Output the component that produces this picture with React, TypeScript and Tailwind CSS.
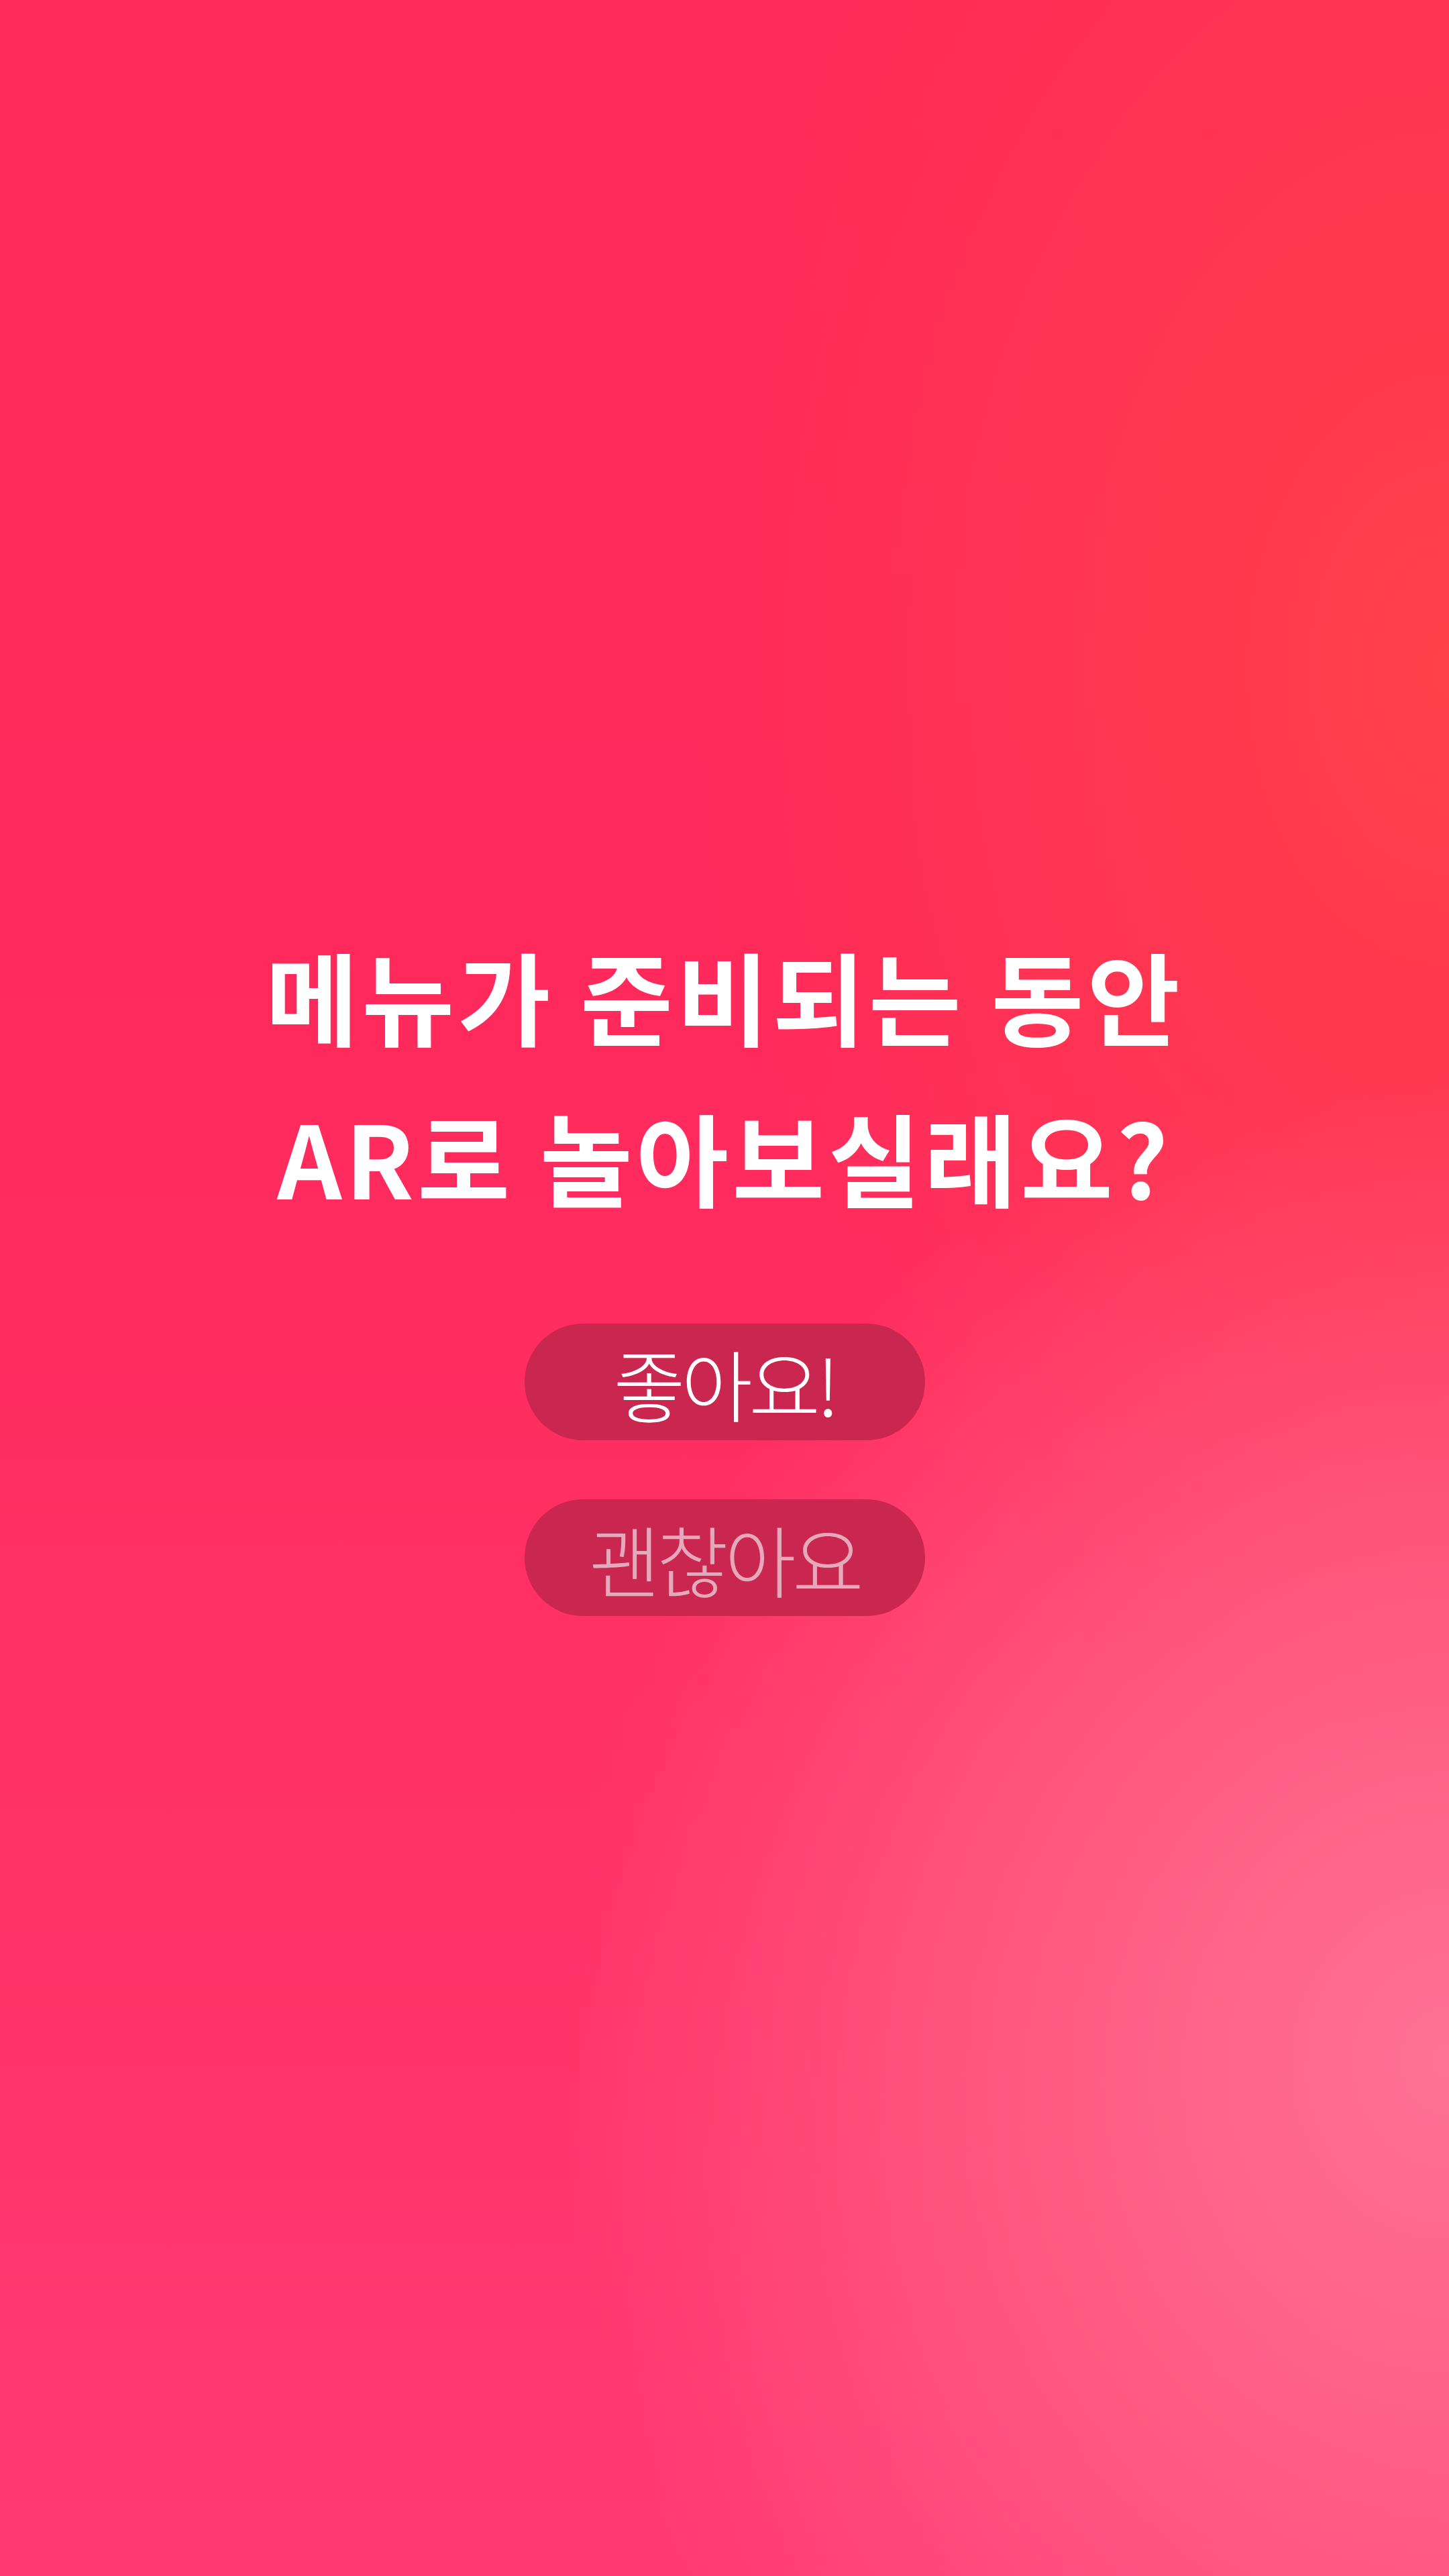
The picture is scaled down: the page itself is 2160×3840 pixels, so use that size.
export default function App() {
  return (
    <div
      className="relative w-full h-screen overflow-hidden flex flex-col items-center justify-center pb-[68px] bg-[radial-gradient(ellipse_1700px_1900px_at_100%_80%,rgba(255,114,148,1)_0%,rgba(255,108,142,0.65)_38%,rgba(255,90,130,0)_78%),radial-gradient(ellipse_1500px_2200px_at_100%_26%,rgba(255,66,72,0.95)_0%,rgba(255,60,75,0)_75%),linear-gradient(180deg,#ff2b58_0%,#ff2a5c_40%,#ff3a72_100%)]"
      style={{ fontFamily: '"Noto Sans CJK KR", "Noto Sans", sans-serif' }}
    >
      <h1 className="text-white font-semibold text-[150px] leading-[240px] tracking-[0.035em] text-center">
        메뉴가 준비되는 동안
        <br />
        AR로 놀아보실래요?
      </h1>
      <div className="mt-[130px] flex flex-col gap-[88px]">
        <button className="w-[597px] h-[174px] rounded-full bg-[#c92750] text-white text-[116px] font-light tracking-[-0.05em] leading-none flex items-center justify-center">
          좋아요!
        </button>
        <button className="w-[597px] h-[174px] rounded-full bg-[#c92750] text-[#e6a9b9] text-[116px] font-light tracking-[-0.05em] leading-none flex items-center justify-center">
          괜찮아요
        </button>
      </div>
    </div>
  );
}
